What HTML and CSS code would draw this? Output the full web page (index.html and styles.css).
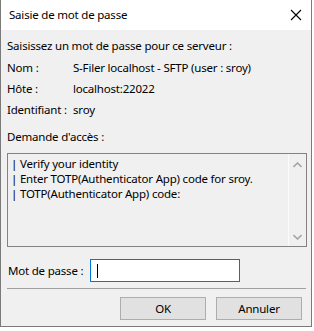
FILE: index.html
```html
<!DOCTYPE html>
<html lang="fr">
<head>
<meta charset="utf-8">
<link rel="stylesheet" href="styles.css">
</head>
<body>
<div class="window">
  <div class="titlebar">
    <span class="title">Saisie de mot de passe</span>
    <svg class="close" width="12" height="12" viewBox="0 0 12 12"><path d="M1 1 L11 11 M11 1 L1 11" stroke="#000" stroke-width="1.1" fill="none"/></svg>
  </div>
  <div class="content">
    <div class="intro">Saisissez un mot de passe pour ce serveur :</div>
    <div class="info">
      <div class="lbl">Nom :</div><div class="val">S-Filer localhost - SFTP (user : sroy)</div>
      <div class="lbl">Hôte :</div><div class="val">localhost:22022</div>
      <div class="lbl">Identifiant :</div><div class="val">sroy</div>
    </div>
    <div class="req">Demande d'accès :</div>
    <div class="textbox">
      <div class="text">
        <div>| Verify your identity</div>
        <div>| Enter TOTP(Authenticator App) code for sroy.</div>
        <div>| TOTP(Authenticator App) code:</div>
      </div>
      <div class="scroll">
        <svg width="9" height="6" viewBox="0 0 9 6"><path d="M0.5 5 L4.5 1 L8.5 5" stroke="#a6a6a6" stroke-width="1.6" fill="none"/></svg>
        <svg width="9" height="6" viewBox="0 0 9 6"><path d="M0.5 1 L4.5 5 L8.5 1" stroke="#a6a6a6" stroke-width="1.6" fill="none"/></svg>
      </div>
    </div>
    <div class="pwrow">
      <label class="pwlabel">Mot de passe :</label>
      <div class="input"><span class="caret"></span></div>
    </div>
    <div class="sep"></div>
    <div class="buttons">
      <div class="btn">OK</div>
      <div class="btn">Annuler</div>
    </div>
  </div>
</div>
</body>
</html>
```

FILE: styles.css
```css
html, body {
  margin: 0;
  padding: 0;
  background: #ffffff;
}
body {
  width: 314px;
  height: 331px;
  overflow: hidden;
  font-family: "Noto Sans", "Open Sans", sans-serif;
  font-size: 11.5px;
  letter-spacing: -0.2px;
  color: #000;
}
.window {
  width: 312px;
  height: 327px;
  box-sizing: border-box;
  border: 1px solid #7a7a7a;
  border-top: none;
  background: #f0f0f0;
  display: flex;
  flex-direction: column;
}
.titlebar {
  height: 30px;
  background: #fff;
  display: flex;
  align-items: center;
  justify-content: space-between;
  padding: 0 9px 0 8px;
}
.title {
  line-height: 15px;
  padding-bottom: 1px;
}
.close {
  display: block;
}
.content {
  padding: 8px 5px 0 6px;
  line-height: 15px;
}
.info {
  display: grid;
  grid-template-columns: 66px 1fr;
  row-gap: 6px;
  margin-top: 7px;
}
.req {
  margin-top: 12px;
}
.textbox {
  margin-top: 9px;
  width: 300px;
  height: 94px;
  box-sizing: border-box;
  border: 1px solid #828282;
  display: flex;
}
.text {
  flex: 1;
  padding: 2px 0 0 3px;
}
.scroll {
  width: 17px;
  border-left: 1px solid #fbfbfb;
  display: flex;
  flex-direction: column;
  align-items: center;
  justify-content: space-between;
  padding: 8px 0 6px;
}
.scroll svg { display: block; }
.pwrow {
  margin-top: 12px;
  display: flex;
  align-items: center;
}
.pwlabel {
  width: 82px;
  padding-left: 1px;
}
.input {
  width: 150px;
  height: 23px;
  box-sizing: border-box;
  border: 1px solid #0078d7;
  background: #fff;
  display: flex;
  align-items: center;
  padding-left: 6px;
}
.caret {
  width: 1px;
  height: 14px;
  background: #000;
}
.sep {
  margin-top: 6px;
  width: 299px;
  height: 1px;
  background: #a0a0a0;
}
.buttons {
  margin-top: 8px;
  display: flex;
  justify-content: flex-end;
  gap: 10px;
  padding-right: 4px;
}
.btn {
  width: 86px;
  height: 23px;
  box-sizing: border-box;
  border: 1px solid #adadad;
  background: #e1e1e1;
  display: flex;
  align-items: center;
  justify-content: center;
}
```
